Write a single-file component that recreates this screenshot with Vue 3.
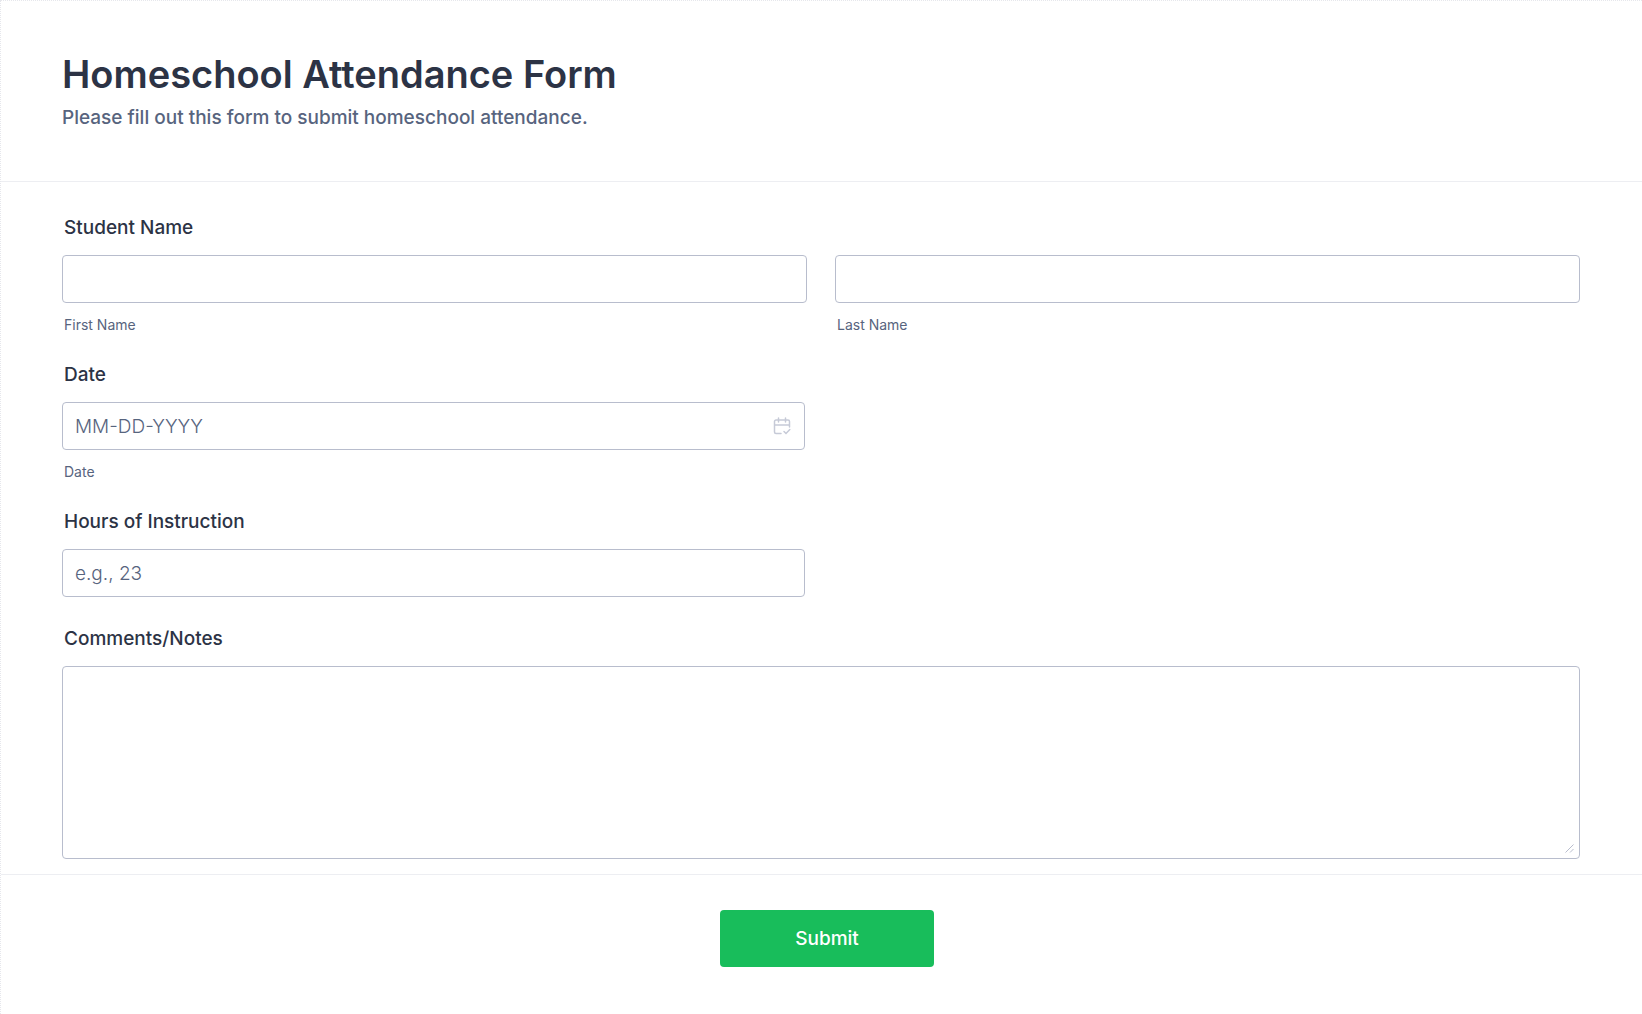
<script setup>
import { ref } from 'vue'

const form = ref({ first: '', last: '', date: '', hours: '', notes: '' })
</script>

<template>
  <form class="form" @submit.prevent>
    <header class="header">
      <h1 class="title">Homeschool Attendance Form</h1>
      <p class="subtitle">Please fill out this form to submit homeschool attendance.</p>
    </header>

    <div class="fields">
      <fieldset class="field">
        <legend class="label">Student Name</legend>
        <div class="pair">
          <div class="part">
            <input id="first" v-model="form.first" class="control" type="text" />
            <label class="sublabel" for="first">First Name</label>
          </div>
          <div class="part">
            <input id="last" v-model="form.last" class="control" type="text" />
            <label class="sublabel" for="last">Last Name</label>
          </div>
        </div>
      </fieldset>

      <div class="field">
        <label class="label" for="date">Date</label>
        <div class="half">
          <input id="date" v-model="form.date" class="control" type="text" placeholder="MM-DD-YYYY" />
          <svg class="calendar" viewBox="0 0 18 18" aria-hidden="true">
            <path d="M8 16.5H3A1.5 1.5 0 0 1 1.500 15V4.500A1.500 1.500 0 0 1 3 3h12a1.500 1.500 0 0 1 1.500 1.500V10M1.500 8h15M5.500 1v4M12.500 1v4M11 14.500l2 2 3.800-4" />
          </svg>
        </div>
        <label class="sublabel" for="date">Date</label>
      </div>

      <div class="field">
        <label class="label" for="hours">Hours of Instruction</label>
        <div class="half">
          <input id="hours" v-model="form.hours" class="control" type="text" placeholder="e.g., 23" />
        </div>
      </div>

      <div class="field">
        <label class="label" for="notes">Comments/Notes</label>
        <div class="area">
          <textarea id="notes" v-model="form.notes" class="control notes"></textarea>
          <svg class="grip" viewBox="0 0 9 9" aria-hidden="true">
            <path d="M.5 8.500l8-8M5 8.500l3.500-3.500" />
          </svg>
        </div>
      </div>
    </div>

    <footer class="footer">
      <button class="submit" type="submit">Submit</button>
    </footer>
  </form>
</template>

<style>
body {
  background: #fff;
}
</style>

<style scoped>
.form {
  box-sizing: border-box;
  min-height: 100vh;
  border-top: 1px dotted #e6e7ec;
  border-left: 1px dotted #e6e7ec;
  color: #2c3345;
  font-family: Inter, "Liberation Sans", sans-serif;
}
.header {
  padding: 49px 62px 51px 61px;
  border-bottom: 1px solid #edeef2;
}
.title {
  margin: 0;
  font-size: 38px;
  line-height: 48px;
  font-weight: 600;
}
.subtitle {
  margin: 8px 0 0;
  font-size: 19px;
  line-height: 24px;
  font-weight: 500;
  color: #57647e;
}
.fields {
  display: flex;
  flex-direction: column;
  gap: 29px;
  padding: 33px 62px 15px 61px;
}
.field {
  display: flex;
  flex-direction: column;
  min-width: 0;
  margin: 0;
  padding: 0;
  border: 0;
}
.label {
  display: block;
  margin-bottom: 14px;
  padding: 0 2px;
  font-size: 19px;
  line-height: 26px;
  font-weight: 500;
}
.pair {
  display: grid;
  grid-template-columns: 1fr 1fr;
  gap: 28px;
}
.part {
  display: flex;
  flex-direction: column;
}
.half {
  position: relative;
  width: calc(50% - 16px);
}
.control {
  display: block;
  box-sizing: border-box;
  width: 100%;
  height: 48px;
  margin: 0;
  padding: 0 12px;
  border: 1px solid #b8bdcd;
  border-radius: 4px;
  background: #fff;
  outline: 0;
  color: #2c3345;
  font-family: inherit;
  font-size: 19px;
  font-weight: 300;
}
.control::placeholder {
  color: #57647e;
  opacity: 1;
}
.sublabel {
  margin-top: 13px;
  padding: 0 2px;
  font-size: 14px;
  line-height: 17px;
  color: #57647e;
}
.calendar {
  position: absolute;
  top: 15px;
  right: 14px;
  width: 18px;
  height: 18px;
  fill: none;
  stroke: #c6cad7;
  stroke-width: 1.5;
  stroke-linecap: round;
}
.area {
  position: relative;
}
.notes {
  height: 193px;
  padding: 12px;
  resize: none;
}
.grip {
  position: absolute;
  right: 6px;
  bottom: 6px;
  width: 9px;
  height: 9px;
  fill: none;
  stroke: #b8bdcd;
}
.footer {
  display: flex;
  justify-content: center;
  padding: 35px 62px 40px 73px;
  border-top: 1px solid #edeef2;
}
.submit {
  width: 214px;
  height: 57px;
  padding: 0;
  border: 0;
  border-radius: 4px;
  background: #18bd5b;
  color: #fff;
  font-family: inherit;
  font-size: 19px;
  font-weight: 500;
}
</style>
